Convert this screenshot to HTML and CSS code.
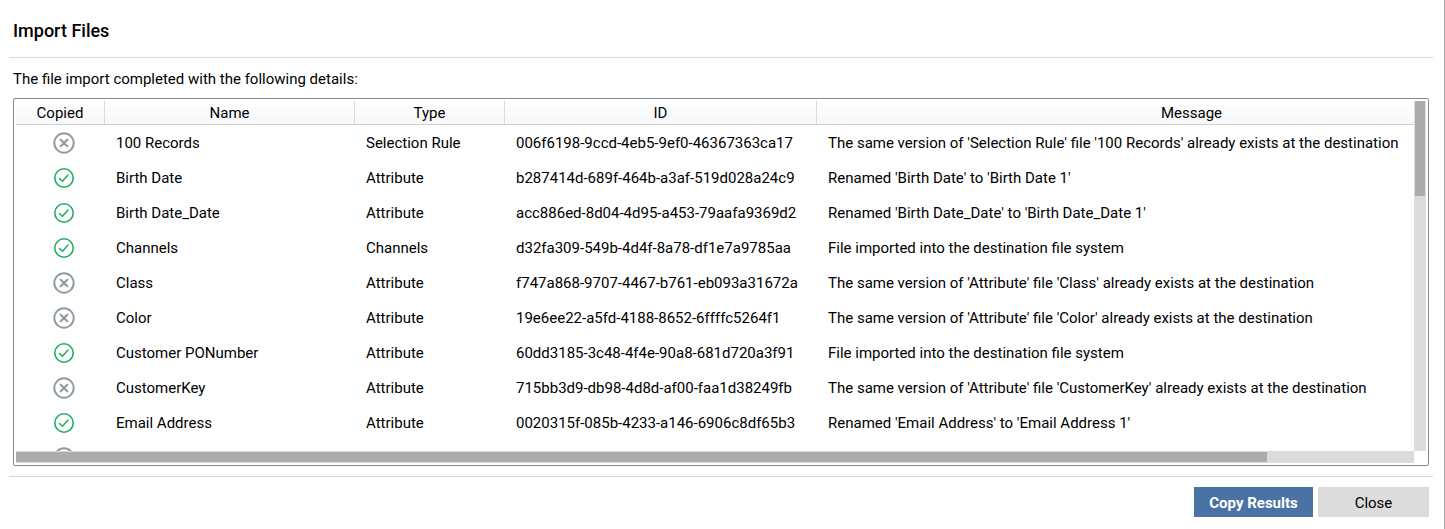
FILE: index.html
```html
<!DOCTYPE html>
<html lang="en">
<head>
  <meta charset="UTF-8">
  <title>Import Files</title>
  <link rel="stylesheet" href="styles.css">
</head>
<body>
  <!-- status icons -->
  <svg class="sprite" aria-hidden="true">
    <symbol id="skipped" viewBox="0 0 22 22">
      <circle cx="11" cy="11" r="9.7" fill="none" stroke="#939ba2" stroke-width="2"/>
      <path d="M7.7 7.7l6.6 6.6M14.3 7.7l-6.6 6.6" fill="none" stroke="#939ba2" stroke-width="2.2" stroke-linecap="round"/>
    </symbol>
    <symbol id="copied" viewBox="0 0 22 22">
      <circle cx="11" cy="11" r="9.2" fill="none" stroke="#1cb060" stroke-width="1.6"/>
      <path d="M6.6 11.6l2.9 2.6 5.5-6.2" fill="none" stroke="#1cb060" stroke-width="1.5" stroke-linecap="round" stroke-linejoin="round"/>
    </symbol>
  </svg>

  <div class="dialog">
    <h1>Import Files</h1>
    <div class="content">
      <p>The file import completed with the following details:</p>
      <div class="grid">
        <div class="viewport">
          <table>
            <colgroup>
              <col class="col-copied">
              <col class="col-name">
              <col class="col-type">
              <col class="col-id">
              <col class="col-message">
            </colgroup>
            <thead>
              <tr><th>Copied</th><th>Name</th><th>Type</th><th>ID</th><th>Message</th></tr>
            </thead>
            <tbody>
              <tr>
                <td><svg class="icon"><use href="#skipped"/></svg></td>
                <td>100 Records</td>
                <td>Selection Rule</td>
                <td>006f6198-9ccd-4eb5-9ef0-46367363ca17</td>
                <td>The same version of 'Selection Rule' file '100 Records' already exists at the destination</td>
              </tr>
              <tr>
                <td><svg class="icon"><use href="#copied"/></svg></td>
                <td>Birth Date</td>
                <td>Attribute</td>
                <td>b287414d-689f-464b-a3af-519d028a24c9</td>
                <td>Renamed 'Birth Date' to 'Birth Date 1'</td>
              </tr>
              <tr>
                <td><svg class="icon"><use href="#copied"/></svg></td>
                <td>Birth Date_Date</td>
                <td>Attribute</td>
                <td>acc886ed-8d04-4d95-a453-79aafa9369d2</td>
                <td>Renamed 'Birth Date_Date' to 'Birth Date_Date 1'</td>
              </tr>
              <tr>
                <td><svg class="icon"><use href="#copied"/></svg></td>
                <td>Channels</td>
                <td>Channels</td>
                <td>d32fa309-549b-4d4f-8a78-df1e7a9785aa</td>
                <td>File imported into the destination file system</td>
              </tr>
              <tr>
                <td><svg class="icon"><use href="#skipped"/></svg></td>
                <td>Class</td>
                <td>Attribute</td>
                <td>f747a868-9707-4467-b761-eb093a31672a</td>
                <td>The same version of 'Attribute' file 'Class' already exists at the destination</td>
              </tr>
              <tr>
                <td><svg class="icon"><use href="#skipped"/></svg></td>
                <td>Color</td>
                <td>Attribute</td>
                <td>19e6ee22-a5fd-4188-8652-6ffffc5264f1</td>
                <td>The same version of 'Attribute' file 'Color' already exists at the destination</td>
              </tr>
              <tr>
                <td><svg class="icon"><use href="#copied"/></svg></td>
                <td>Customer PONumber</td>
                <td>Attribute</td>
                <td>60dd3185-3c48-4f4e-90a8-681d720a3f91</td>
                <td>File imported into the destination file system</td>
              </tr>
              <tr>
                <td><svg class="icon"><use href="#skipped"/></svg></td>
                <td>CustomerKey</td>
                <td>Attribute</td>
                <td>715bb3d9-db98-4d8d-af00-faa1d38249fb</td>
                <td>The same version of 'Attribute' file 'CustomerKey' already exists at the destination</td>
              </tr>
              <tr>
                <td><svg class="icon"><use href="#copied"/></svg></td>
                <td>Email Address</td>
                <td>Attribute</td>
                <td>0020315f-085b-4233-a146-6906c8df65b3</td>
                <td>Renamed 'Email Address' to 'Email Address 1'</td>
              </tr>
              <tr>
                <td><svg class="icon"><use href="#skipped"/></svg></td>
                <td></td>
                <td></td>
                <td></td>
                <td></td>
              </tr>
            </tbody>
          </table>
        </div>
        <div class="scroll-y"><div class="thumb"></div></div>
        <div class="scroll-x"><div class="thumb"></div></div>
      </div>
    </div>
    <div class="footer">
      <button type="button" class="primary">Copy Results</button>
      <button type="button">Close</button>
    </div>
  </div>
</body>
</html>
```
FILE: styles.css
```css
* {
  box-sizing: border-box;
}
body {
  margin: 0;
  font-family: Roboto, sans-serif;
  font-size: 15px;
  line-height: 20px;
  color: #000;
  background: #fff;
}
.sprite {
  display: none;
}
.dialog {
  display: flex;
  flex-direction: column;
  height: 100vh;
  padding: 0 11px 0 9px;
  border-right: 1px solid #a6a6a6;
}
h1 {
  margin: 0;
  padding: 21px 4px 16px;
  border-bottom: 1px solid #d3dbd9;
  font-size: 18px;
  font-weight: 500;
}
.content {
  display: flex;
  flex-direction: column;
  flex: 1;
  min-height: 0;
  padding: 11px 4px 10px;
}
p {
  margin: 0 0 9px;
}

/* results list */
.grid {
  display: grid;
  grid-template-columns: minmax(0, 1fr) 12px;
  grid-template-rows: minmax(0, 1fr) 12px;
  flex: 1;
  min-height: 0;
  padding: 2px;
  border: 1px solid #838891;
  border-radius: 2px;
}
.viewport {
  overflow: hidden;
}
table {
  width: 1551px;
  table-layout: fixed;
  border-collapse: separate;
  border-spacing: 0;
}
.col-copied {
  width: 89px;
}
.col-name {
  width: 250px;
}
.col-type {
  width: 150px;
}
.col-id {
  width: 312px;
}
.col-message {
  width: 750px;
}
th {
  height: 24px;
  padding: 0;
  border-right: 1px solid #dcdcdc;
  border-bottom: 1px solid #d0d2d2;
  background: linear-gradient(#fff, #f6f7f9);
  font-weight: 400;
}
td {
  height: 35px;
  padding: 0 0 0 11px;
  white-space: nowrap;
}
td:first-child {
  padding: 0 0 0 7px;
}
.icon {
  display: block;
  width: 22px;
  height: 22px;
  margin: 0 auto;
}

/* scroll bars */
.scroll-y,
.scroll-x {
  background: #dcdcdc;
}
.thumb {
  background: #acacac;
}
.scroll-y .thumb {
  width: 10px;
  height: 27%;
  margin-left: 1px;
}
.scroll-x {
  padding-top: 1px;
}
.scroll-x .thumb {
  width: 89.5%;
  height: 10px;
}

.footer {
  display: flex;
  justify-content: flex-end;
  gap: 5px;
  padding: 10px 4px 12px;
  border-top: 1px solid #d3dbd9;
}
button {
  width: 111px;
  height: 30px;
  padding: 2px 0 0;
  border: none;
  background: #dcdcdc;
  color: #000;
  font: inherit;
  cursor: pointer;
}
.primary {
  width: 119px;
  background: #4a72a4;
  color: #fff;
  font-weight: 700;
}
```
